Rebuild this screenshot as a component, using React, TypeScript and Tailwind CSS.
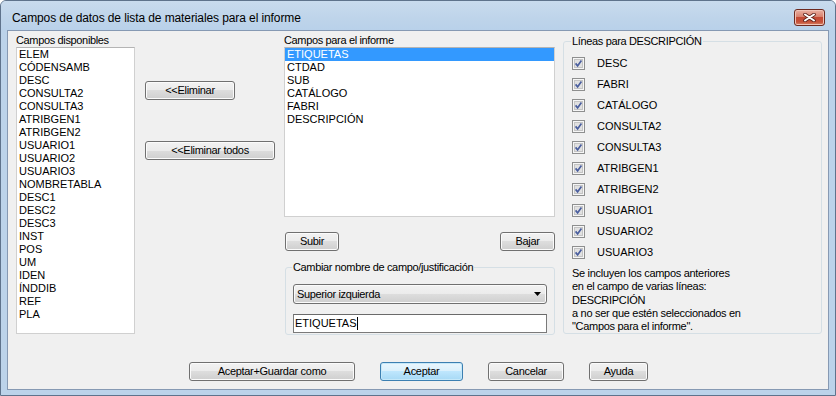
import React from "react";

const AVAILABLE = [
  "ELEM", "CÓDENSAMB", "DESC", "CONSULTA2", "CONSULTA3", "ATRIBGEN1", "ATRIBGEN2",
  "USUARIO1", "USUARIO2", "USUARIO3", "NOMBRETABLA", "DESC1", "DESC2", "DESC3",
  "INST", "POS", "UM", "IDEN", "ÍNDDIB", "REF", "PLA",
];

const REPORT = ["ETIQUETAS", "CTDAD", "SUB", "CATÁLOGO", "FABRI", "DESCRIPCIÓN"];

const LINES = [
  "DESC", "FABRI", "CATÁLOGO", "CONSULTA2", "CONSULTA3",
  "ATRIBGEN1", "ATRIBGEN2", "USUARIO1", "USUARIO2", "USUARIO3",
];

const btn =
  "h-[19px] rounded-[3px] border border-[#707070] bg-[linear-gradient(#f2f2f2_0%,#ebebeb_50%,#dddddd_50%,#cfcfcf_100%)] shadow-[inset_0_0_0_1px_#fbfbfb] text-[11px] leading-[17px] tracking-[-0.3px] text-black";

function Check() {
  return (
    <svg width="13" height="13" viewBox="0 0 13 13" className="shrink-0">
      <rect x="0.5" y="0.5" width="12" height="12" fill="#f6f6f6" stroke="#8e8f8f" />
      <rect x="2.5" y="2.5" width="8" height="8" fill="#e1e1e1" stroke="#c4c4c4" />
      <path d="M3.6 6.4 L5.6 8.9 L9.4 3.4" stroke="#4a5e9e" strokeWidth="1.7" fill="none" />
    </svg>
  );
}

export default function App() {
  return (
    <div
      className="w-[836px] h-[396px] rounded-t-[6px] border border-[#5f738c] bg-[#bcd3ea] flex flex-col overflow-hidden"
      style={{ fontFamily: '"Liberation Sans", Arial, sans-serif' }}
    >
      {/* Title bar */}
      <div className="h-[29px] shrink-0 flex items-center pl-[11px] pr-[10px] pt-[4px] bg-[linear-gradient(#c9dbee_0%,#bed4ea_60%,#b9d1ea_100%)]">
        <span className="text-[12px] text-black tracking-[-0.1px]">
          Campos de datos de lista de materiales para el informe
        </span>
        <button className="ml-auto w-[31px] h-[17px] rounded-[3px] border border-[#6e2a20] bg-[linear-gradient(#eab0a2_0%,#d9826f_45%,#c44a35_50%,#c5513a_80%,#d78868_100%)] shadow-[inset_0_0_0_1px_#f0c2b6] flex items-center justify-center">
          <svg width="13" height="9" viewBox="0 0 13 9">
            <path d="M2 1.5 L11 7.5 M11 1.5 L2 7.5" stroke="#5a211a" strokeWidth="3.6" strokeLinecap="round" />
            <path d="M2 1.5 L11 7.5 M11 1.5 L2 7.5" stroke="#ffffff" strokeWidth="2" strokeLinecap="round" />
          </svg>
        </button>
      </div>

      {/* Client area */}
      <div className="mx-[6px] h-[360px] shrink-0 border border-[#8699b3] bg-[#f0f0f0] pt-[3px] text-[11px] text-black">
        <div className="h-[301px] flex">
          {/* Available fields */}
          <div className="ml-[8px] w-[119px] flex flex-col">
            <div className="h-[13px] leading-[13px] tracking-[-0.35px]">Campos disponibles</div>
            <div className="h-[287px] bg-white border border-[#d0d0d0] border-t-[#b4b4b4] pl-[2px]">
              {AVAILABLE.map((f) => (
                <div key={f} className="h-[13px] leading-[13px]">{f}</div>
              ))}
            </div>
          </div>

          {/* Remove buttons */}
          <div className="ml-[10px] w-[131px] flex flex-col items-start pt-[47px]">
            <button className={`${btn} w-[90px]`}>&lt;&lt;Eliminar</button>
            <button className={`${btn} w-[130px] mt-[41px]`}>&lt;&lt;Eliminar todos</button>
          </div>

          {/* Report fields */}
          <div className="ml-[8px] w-[271px] flex flex-col">
            <div className="h-[13px] leading-[13px] tracking-[-0.35px]">Campos para el informe</div>
            <div className="h-[170px] bg-white border border-[#d0d0d0] border-t-[#b4b4b4]">
              {REPORT.map((f, i) => (
                <div
                  key={f}
                  className={`h-[13px] leading-[13px] pl-[2px] ${i === 0 ? "bg-[#3399ff] text-white" : ""}`}
                >
                  {f}
                </div>
              ))}
            </div>
            <div className="mt-[15px] flex justify-between pl-[1px]">
              <button className={`${btn} w-[54px] h-[18px] leading-[16px]`}>Subir</button>
              <button className={`${btn} w-[55px] h-[18px] leading-[16px]`}>Bajar</button>
            </div>
            <fieldset className="mt-[10px] ml-[1px] w-[270px] h-[74px] rounded-[3px] border border-[#d5dfe5]">
              <legend className="ml-[6px] px-[1px] h-[13px] leading-[13px] tracking-[-0.35px]">
                Cambiar nombre de campo/justificación
              </legend>
              <div className="mx-[7px] mt-[10px] h-[20px] rounded-[3px] border border-[#707070] bg-[linear-gradient(#f2f2f2_0%,#ebebeb_50%,#dddddd_50%,#cfcfcf_100%)] shadow-[inset_0_0_0_1px_#fbfbfb] flex items-center pl-[3px] pr-[5px]">
                <span className="tracking-[-0.35px]">Superior izquierda</span>
                <svg width="7" height="4" viewBox="0 0 7 4" className="ml-auto">
                  <path d="M0 0 H7 L3.5 4 Z" fill="#000" />
                </svg>
              </div>
              <div className="mx-[7px] mt-[10px] h-[19px] bg-white border border-[#7a7a7a] border-t-[#6a6a6a] flex items-center pl-[1px]">
                <span>ETIQUETAS</span>
                <span className="w-px h-[13px] bg-black" />
              </div>
            </fieldset>
          </div>

          {/* Lines for DESCRIPCIÓN */}
          <fieldset className="ml-[8px] mt-[1px] w-[259px] h-[299px] rounded-[3px] border border-[#d5dfe5] pl-[8px]">
            <legend className="-ml-[1px] px-[1px] h-[13px] leading-[13px] tracking-[-0.35px]">
              Líneas para DESCRIPCIÓN
            </legend>
            <div className="pt-[5px]">
              {LINES.map((l) => (
                <div key={l} className="h-[21px] flex items-center gap-[12px]">
                  <Check />
                  <span>{l}</span>
                </div>
              ))}
            </div>
            <div className="mt-[4px] leading-[13.3px] tracking-[-0.3px]">
              <div>Se incluyen los campos anteriores</div>
              <div>en el campo de varias líneas:</div>
              <div>DESCRIPCIÓN</div>
              <div>a no ser que estén seleccionados en</div>
              <div>"Campos para el informe".</div>
            </div>
          </fieldset>
        </div>

        {/* Bottom buttons */}
        <div className="mt-[27px] flex justify-center gap-[25px] pl-[1px]">
          <button className={`${btn} w-[166px]`}>Aceptar+Guardar como</button>
          <button className="w-[83px] h-[19px] rounded-[3px] border border-[#3c7fb1] bg-[linear-gradient(#eaf6fd_0%,#d9f0fc_50%,#bee6fd_50%,#a7d9f5_100%)] shadow-[inset_0_0_0_1px_#c5e8f9] text-[11px] leading-[17px] tracking-[-0.3px]">
            Aceptar
          </button>
          <button className={`${btn} w-[76px]`}>Cancelar</button>
          <button className={`${btn} w-[59px]`}>Ayuda</button>
        </div>
      </div>
    </div>
  );
}
